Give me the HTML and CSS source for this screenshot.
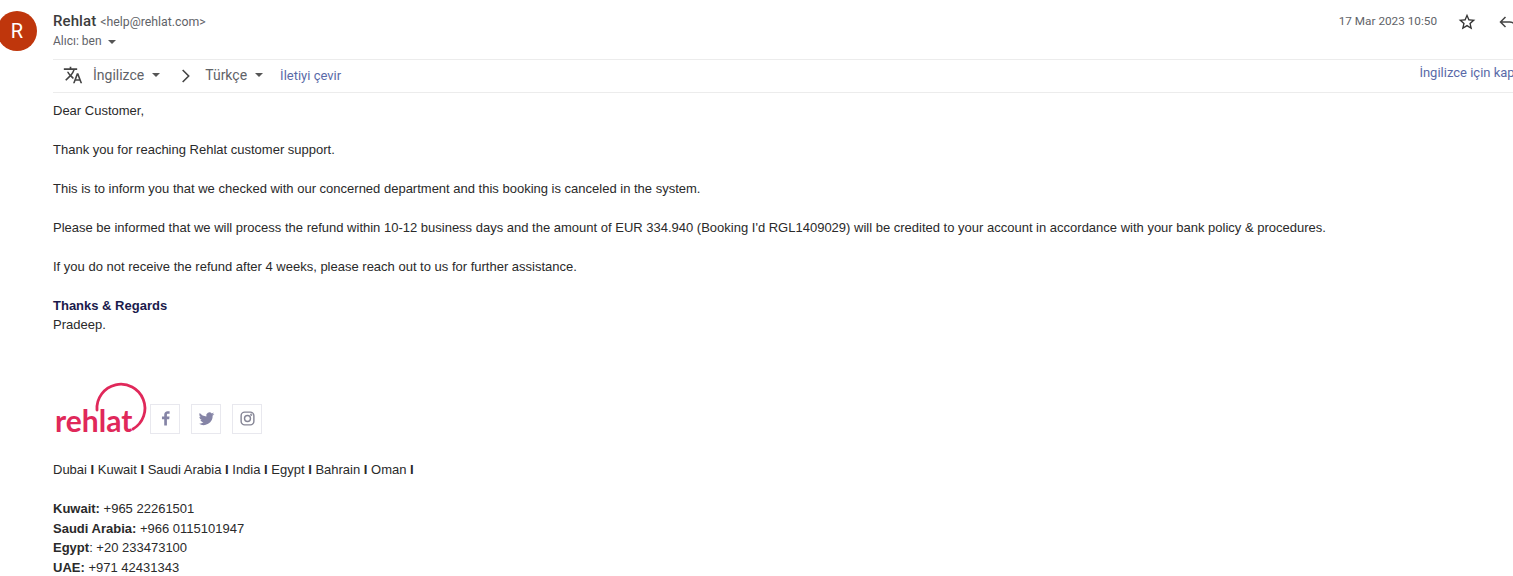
FILE: index.html
```html
<!DOCTYPE html>
<html lang="en">
<head>
    <meta charset="UTF-8">
    <meta name="viewport" content="width=device-width, initial-scale=1.0">
    <title>Rehlat - Mail</title>
    <link rel="stylesheet" href="styles.css">
</head>
<body>
    <div class="message">
        <div class="avatar">R</div>
        <div class="message-main">
            <!-- Sender -->
            <div class="message-header">
                <div class="sender">
                    <div class="sender-line">
                        <span class="sender-name">Rehlat</span>
                        <span class="sender-mail">&lt;help@rehlat.com&gt;</span>
                    </div>
                    <div class="recipient">Alıcı: ben <span class="caret small"></span></div>
                </div>
                <div class="message-tools">
                    <span class="date">17 Mar 2023 10:50</span>
                    <svg class="star" viewBox="0 0 24 24">
                        <path d="M22 9.24l-7.19-.62L12 2 9.19 8.63 2 9.24l5.46 4.73L5.82 21 12 17.27 18.18 21l-1.63-7.03L22 9.24zM12 15.4l-3.76 2.27 1-4.28-3.32-2.88 4.38-.38L12 6.1l1.71 4.04 4.38.38-3.32 2.88 1 4.28L12 15.4z"/>
                    </svg>
                    <svg class="reply" viewBox="0 0 24 24">
                        <path d="M9 6l-6 6 6 6M3 12h11c4 0 7 2.500 7 8" fill="none" stroke="#444" stroke-width="1.800"/>
                    </svg>
                </div>
            </div>

            <!-- Translate bar -->
            <div class="translate-bar">
                <div class="translate-left">
                    <svg class="translate-icon" viewBox="0 0 24 24">
                        <path d="M12.870 15.070l-2.540-2.510.030-.030A17.520 17.520 0 0 0 14.070 6H17V4h-7V2H8v2H1v2h11.170C11.500 7.920 10.440 9.750 9 11.350 8.070 10.320 7.300 9.190 6.690 8h-2c.73 1.630 1.730 3.170 2.980 4.560l-5.090 5.020L4 19l5-5 3.110 3.110.76-2.040zM18.500 10h-2L12 22h2l1.120-3h4.750L21 22h2l-4.500-12zm-2.620 7l1.620-4.330L19.120 17h-3.240z"/>
                    </svg>
                    <span class="lang">İngilizce</span>
                    <span class="caret"></span>
                    <svg class="chevron" viewBox="0 0 24 24">
                        <path d="M7 3l9 9-9 9" fill="none" stroke="#444" stroke-width="2.400"/>
                    </svg>
                    <span class="lang">Türkçe</span>
                    <span class="caret"></span>
                    <a href="#" class="translate-link">İletiyi çevir</a>
                </div>
                <a href="#" class="translate-off">İngilizce için kapat</a>
            </div>

            <!-- Body -->
            <div class="message-body">
                <p>Dear Customer,</p>
                <p>Thank you for reaching Rehlat customer support.</p>
                <p>This is to inform you that we checked with our concerned department and this booking is canceled in the system.</p>
                <p>Please be informed that we will process the refund within 10-12 business days and the amount of EUR 334.940 (Booking I'd RGL1409029) will be credited to your account in accordance with your bank policy &amp; procedures.</p>
                <p>If you do not receive the refund after 4 weeks, please reach out to us for further assistance.</p>
                <p><strong class="regards">Thanks &amp; Regards</strong><br>Pradeep.</p>

                <div class="brand-row">
                    <svg class="logo" viewBox="0 0 96 54">
                        <path d="M44 30A24 24 0 1 1 80 49" fill="none" stroke="#e0285a" stroke-width="2.800" stroke-linecap="round"/>
                        <text x="2" y="52" class="logo-text">rehlat</text>
                    </svg>
                    <a href="#" class="social">
                        <svg viewBox="0 0 24 24"><path fill="#8584a6" d="M14 22v-9h3.200l.5-3.700H14V7c0-1.100.3-1.800 1.800-1.800h2V1.900C17.400 1.900 16.300 1.800 15 1.800c-2.800 0-4.800 1.700-4.800 4.900v2.600H7V13h3.200v9z"/></svg>
                    </a>
                    <a href="#" class="social">
                        <svg viewBox="0 0 24 24"><path fill="#8584a6" d="M23 5.500c-.8.400-1.700.6-2.600.700.900-.6 1.600-1.400 2-2.500-.9.500-1.800.9-2.900 1.100A4.500 4.500 0 0 0 11.800 9C8 8.800 4.700 7 2.500 4.200c-1.200 2-.6 4.600 1.400 6-.7 0-1.400-.2-2-.6 0 2.200 1.500 4.100 3.600 4.500-.7.200-1.400.2-2 .1.600 1.800 2.300 3.100 4.200 3.100A9 9 0 0 1 1 19.200 12.800 12.800 0 0 0 20.700 7.800c.9-.6 1.700-1.400 2.300-2.300z"/></svg>
                    </a>
                    <a href="#" class="social">
                        <svg viewBox="0 0 24 24" fill="none" stroke="#858595" stroke-width="2"><rect x="3" y="3" width="18" height="18" rx="5"/><circle cx="12" cy="12" r="4.200"/><circle cx="17.300" cy="6.700" r=".6"/></svg>
                    </a>
                </div>

                <p class="countries">Dubai <b>I</b> Kuwait <b>I</b> Saudi Arabia <b>I</b> India <b>I</b> Egypt <b>I</b> Bahrain <b>I</b> Oman <b>I</b></p>

                <p>
                    <strong>Kuwait:</strong> +965 22261501<br>
                    <strong>Saudi Arabia:</strong> +966 0115101947<br>
                    <strong>Egypt</strong>: +20 233473100<br>
                    <strong>UAE:</strong> +971 42431343
                </p>
            </div>
        </div>
    </div>
</body>
</html>
```

FILE: styles.css
```css
* {
    margin: 0;
    padding: 0;
    box-sizing: border-box;
}

html, body {
    height: 576px;
    overflow: hidden;
    background: #fff;
}

body {
    font-family: 'Liberation Sans', Arial, sans-serif;
    color: #222;
}

a {
    text-decoration: none;
}

.message {
    display: flex;
    width: 1540px;
    padding-top: 11px;
    margin-left: -3px;
}

.avatar {
    width: 40px;
    height: 40px;
    flex-shrink: 0;
    margin-right: 16px;
    border-radius: 50%;
    background: #bf360c;
    color: #fff;
    font: 400 20px/40px Roboto, sans-serif;
    text-align: center;
}

.message-main {
    width: 1480px;
}

/* Header */
.message-header {
    display: flex;
    justify-content: space-between;
    height: 48px;
    font-family: Roboto, sans-serif;
}

.sender-line {
    line-height: 20px;
}

.sender-name {
    font-size: 15px;
    font-weight: 500;
    letter-spacing: 0.1px;
    color: #3c3c3c;
}

.sender-mail {
    font-size: 12.300px;
    color: #5f6368;
}

.recipient {
    font-size: 12px;
    line-height: 20px;
    margin-top: -1px;
    color: #5f6368;
}

.caret {
    display: inline-block;
    width: 0;
    height: 0;
    border-left: 4.500px solid transparent;
    border-right: 4.500px solid transparent;
    border-top: 4.500px solid #555;
    vertical-align: middle;
}

.caret.small {
    margin-left: 3px;
}

.message-tools {
    display: flex;
    align-items: flex-start;
}

.date {
    font-size: 11.750px;
    line-height: 20px;
    color: #5f6368;
    margin-right: 20px;
}

.star {
    width: 20px;
    height: 20px;
    margin-top: 1px;
    margin-right: 21px;
    fill: #333;
}

.reply {
    width: 20px;
    height: 20px;
    margin-top: 1px;
    margin-right: 15px;
}

/* Translate bar */
.translate-bar {
    display: flex;
    justify-content: space-between;
    height: 34px;
    padding-right: 7px;
    border-top: 1px solid #ececec;
    border-bottom: 1px solid #ececec;
    font-family: Roboto, sans-serif;
}

.translate-left {
    display: flex;
    align-items: center;
    padding-left: 10px;
    padding-bottom: 2px;
}

.translate-icon {
    width: 20px;
    height: 20px;
    margin-right: 10px;
    fill: #444;
}

.lang {
    font-size: 14px;
    color: #5f6368;
    margin-right: 8px;
}

.chevron {
    width: 16px;
    height: 16px;
    margin: 1px 11px 0 18px;
}

.translate-link {
    font-size: 13px;
    color: #5a6aa8;
    margin-left: 17px;
}

.translate-off {
    font-size: 13px;
    color: #5a6aa8;
    line-height: 26px;
}

/* Body */
.message-body {
    font-size: 13px;
    line-height: 19.500px;
    color: #2a2a2a;
    padding-top: 7.750px;
}

.message-body p {
    margin-bottom: 19.500px;
}

.regards {
    color: #1a1a4b;
}

.brand-row {
    display: flex;
    align-items: flex-end;
    margin-top: 45px;
    margin-bottom: 26.250px;
    height: 54px;
}

.logo {
    width: 96px;
    height: 54px;
    flex-shrink: 0;
    margin-right: 1px;
    overflow: visible;
}

.logo-text {
    font: 700 30px Lato, sans-serif;
    fill: #e0285a;
}

.social {
    display: flex;
    justify-content: center;
    align-items: center;
    width: 30px;
    height: 30px;
    margin-right: 11px;
    border: 1px solid #e8e8ee;
}

.social svg {
    width: 17px;
    height: 17px;
}

.countries b {
    font-weight: 700;
}
```
